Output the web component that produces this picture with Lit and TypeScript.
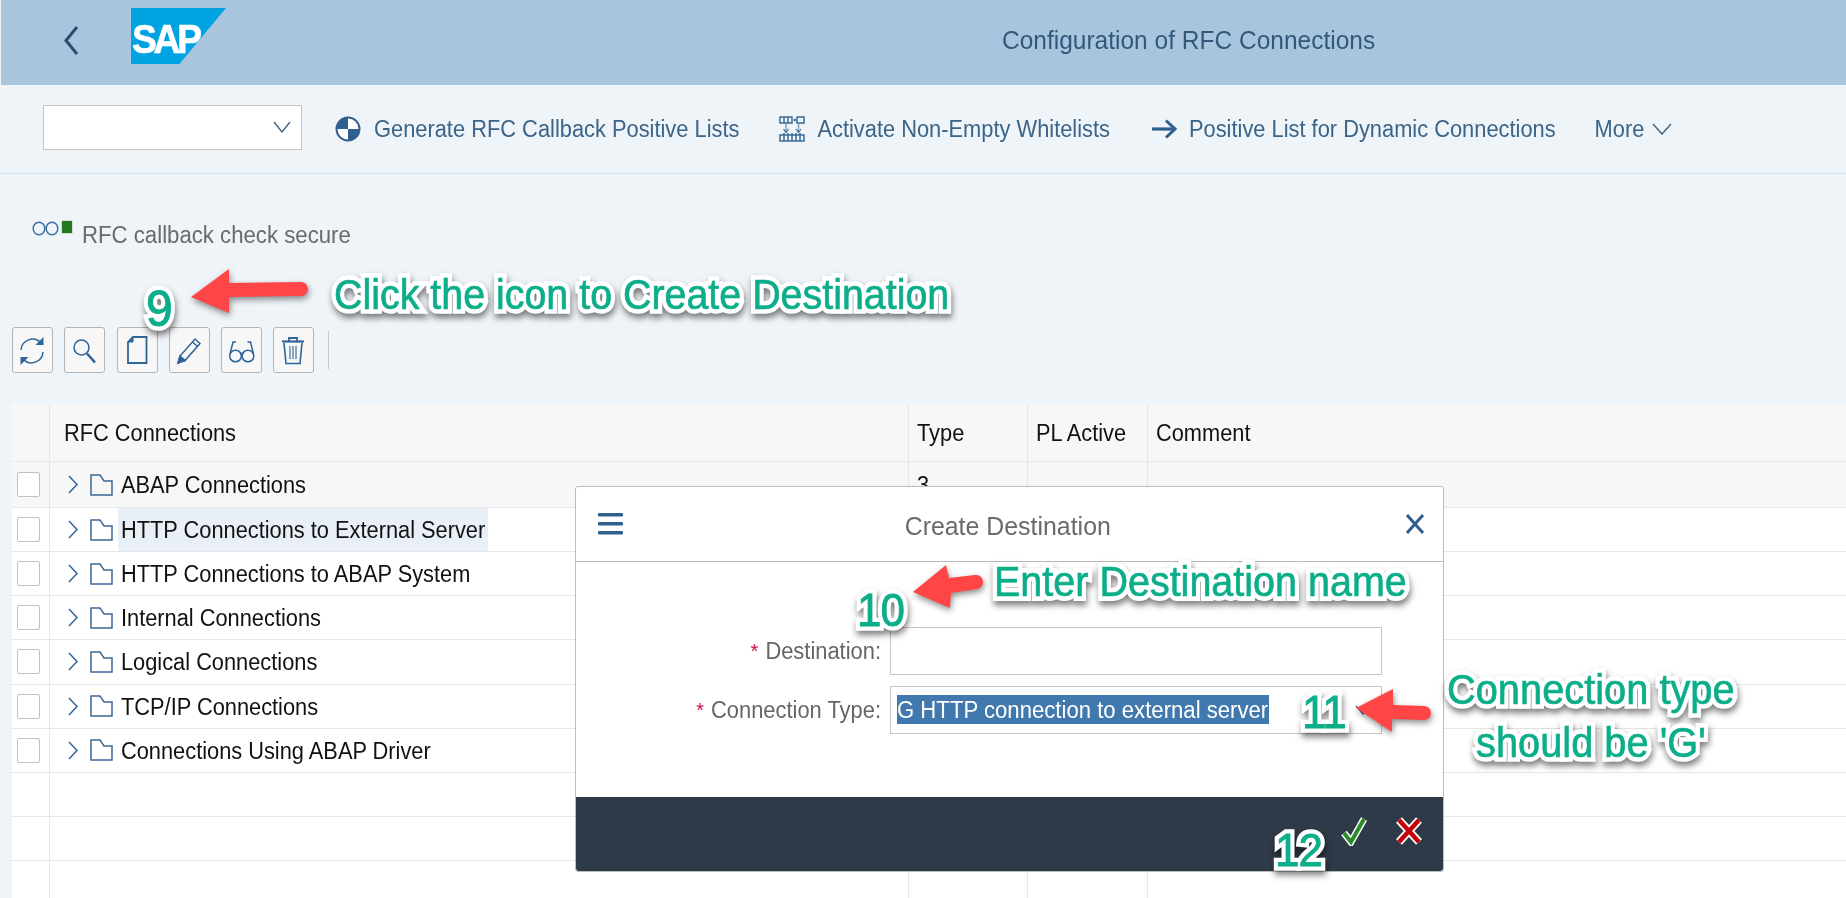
import { LitElement, html, css, svg } from "lit";
import { customElement } from "lit/decorators.js";

const rows = [
  "ABAP Connections",
  "HTTP Connections to External Server",
  "HTTP Connections to ABAP System",
  "Internal Connections",
  "Logical Connections",
  "TCP/IP Connections",
  "Connections Using ABAP Driver",
  "", "", "",
];

const ic = (inner: unknown) =>
  html`<svg width="30" height="34" viewBox="0 0 30 34" fill="none" stroke="#2f6497" stroke-width="1.5">${inner}</svg>`;

const toolIcons = [
  ic(svg`<path d="M3 17A11.500 11.500 0 0 1 23 10"/><path d="M25.500 4v8h-8z" stroke-width="0" fill="#2f6497"/><path d="M25 19A11.500 11.500 0 0 1 5 26"/><path d="M2.500 32v-8h8z" stroke-width="0" fill="#2f6497"/>`),
  ic(svg`<circle cx="11.500" cy="14.500" r="7.500"/><path d="M17 20.500l8 9" stroke-width="2.600"/>`),
  ic(svg`<path d="M11 4h13.500v26H6V9z" stroke-width="1.800"/><path d="M11 4v5H6z" fill="#2f6497" stroke-width="1"/>`),
  ic(svg`<path d="M4 30l2-7L21 6l5 4.500L11 27.500z"/><path d="M4 30l2-7 5 4.500z" fill="#2f6497"/><path d="M18.500 9l5 4.500"/>`),
  ic(svg`<circle cx="8.500" cy="23" r="5.800"/><circle cx="21" cy="23" r="5.800"/><path d="M13.500 21q1.300-1.500 2.500 0M3 21l3-12h3M26.500 21l-3-12h-3"/>`),
  ic(svg`<path d="M3 8.500h22" stroke-width="2.200"/><path d="M10 8V5h8v3" stroke-width="1.800"/><path d="M5 10l2 20.500h14l2-20.500" stroke-width="1.600"/><path d="M11 13v13M14 13v13M17 13v13" stroke-width="1.100"/>`),
];

@customElement("app-root")
export class AppRoot extends LitElement {
  static styles = css`
    :host {
      display: block;
      position: relative;
      width: 1846px;
      height: 898px;
      overflow: hidden;
      background: #eff4f9;
      font-family: "Liberation Sans", Arial, sans-serif;
    }
    .t {
      display: inline-block;
      transform: scaleY(1.1);
    }
    .header {
      height: 84.500px;
      background: #a9c5de;
      display: flex;
      align-items: flex-start;
      margin-left: 1px;
    }
    .back { margin: 26px 0 0 62px; }
    .logo {
      position: relative;
      margin: 8px 0 0 52px;
      width: 95px;
      height: 56px;
      background: #00a3e2;
      clip-path: polygon(0 0, 100% 0, 51% 100%, 0 100%);
      flex: none;
    }
    .logo span {
      position: absolute;
      left: 1px;
      top: 12px;
      color: #fff;
      font: bold 40px/38px "Liberation Sans", sans-serif;
      letter-spacing: -3.500px;
      -webkit-text-stroke: 0.7px #fff;
      transform: scaleX(0.93);
      transform-origin: left;
    }
    .title {
      margin: 24px 0 0 776px;
      font-size: 24.500px;
      line-height: 34px;
      color: #32597c;
      white-space: nowrap;
    }
    .title .t { transform: scaleY(1.06); }
    .toolbar {
      height: 88.500px;
      border-bottom: 1.500px solid #d6e3f0;
      display: flex;
      align-items: center;
      padding: 0 0 0 43px;
      color: #3a6488;
      font-size: 21.850px;
      white-space: nowrap;
    }
    .select {
      width: 259px;
      height: 45px;
      margin-top: -3px;
      background: #fff;
      border: 1px solid #c4c4c4;
      display: flex;
      align-items: center;
      justify-content: flex-end;
      padding-right: 10px;
      box-sizing: border-box;
    }
    .tb { display: flex; align-items: center; }
    .tb1 { margin-left: 33px; gap: 13px; }
    .tb2 { margin-left: 40px; gap: 12px; }
    .tb3 { margin-left: 41px; gap: 12px; }
    .tb4 { margin-left: 39px; gap: 8px; }
    .status {
      height: 121px;
      box-sizing: border-box;
      padding: 46px 0 0 32px;
      display: flex;
      align-items: flex-start;
      gap: 9px;
      color: #6a6a6a;
      font-size: 22.200px;
      line-height: 30px;
    }
    .buttons {
      display: flex;
      gap: 11.300px;
      padding-left: 12px;
      margin: 32px 0 33px;
      box-sizing: border-box;
      align-items: flex-start;
      height: 44px;
    }
    .btn {
      width: 41px;
      height: 46px;
      box-sizing: border-box;
      background: #f7f7f7;
      border: 1.500px solid #b4b4b4;
      border-radius: 3px;
      display: flex;
      align-items: center;
      justify-content: center;
    }
    .sep {
      width: 1.500px;
      height: 38px;
      margin: 4px 0 0 2px;
      background: #c8c8c8;
    }
    .table {
      margin-left: 12px;
      background: #fff;
      color: #111;
      font-size: 21.800px;
    }
    .row {
      display: grid;
      grid-template-columns: 38px 859px 119px 120px 1fr;
      height: 44.150px;
      box-sizing: border-box;
      border-bottom: 1.500px solid #e6e6e6;
    }
    .row.head {
      height: 58px;
      background: #f7f7f7;
      border-bottom-color: #e8e8e8;
    }
    .row.first { background: #f7f7f7; height: 46px; }
    .cell {
      display: flex;
      align-items: center;
      border-right: 1.500px solid #e6e6e6;
      padding-left: 8px;
      min-width: 0;
      white-space: nowrap;
    }
    .cell:last-child { border-right: none; }
    .cell.check { padding-left: 5px; }
    .cell.name { padding-left: 18px; }
    .cell.headname { padding-left: 14px; }
    .cb {
      width: 23px;
      height: 25px;
      box-sizing: border-box;
      background: #fff;
      border: 1.500px solid #c4c0c0;
      border-radius: 2px;
    }
    .folder { margin: 0 5px 0 12px; flex: none; }
    .label { padding: 0 3px; height: 43px; line-height: 43px; }
    .label.hi { background: #e8eff7; }
    .dialog {
      position: absolute;
      left: 575px;
      top: 485.500px;
      width: 868.500px;
      height: 386.500px;
      box-sizing: border-box;
      background: #fff;
      border: 1px solid #bcbcbc;
      border-radius: 3px;
      display: flex;
      flex-direction: column;
    }
    .dhead {
      height: 74px;
      border-bottom: 1.500px solid #bbb;
      display: flex;
      align-items: center;
      justify-content: space-between;
      padding: 0 18px 0 22px;
      flex: none;
    }
    .dtitle { font-size: 24.900px; color: #6a6a6a; margin: 6px 12px 0 0; }
    .dtitle .t { transform: scaleY(1.05); }
    .dbody {
      flex: 1;
      padding-top: 65px;
      display: flex;
      flex-direction: column;
      gap: 11px;
    }
    .frow {
      display: grid;
      grid-template-columns: 305px 492px;
      gap: 9px;
      align-items: center;
      font-size: 21.900px;
      color: #666;
    }
    .flabel { text-align: right; white-space: nowrap; }
    .req { color: #d0104c; font-size: 20px; margin-right: 7px; }
    .input {
      height: 48px;
      box-sizing: border-box;
      border: 1.500px solid #c6c6c6;
      background: #fff;
      display: flex;
      align-items: center;
      justify-content: space-between;
      padding: 0 10px 0 6px;
    }
    .sel {
      background: #4179ae;
      color: #fff;
      height: 29px;
      line-height: 29px;
      width: 372px;
      white-space: nowrap;
      font-size: 22.150px;
    }
    .dfoot {
      height: 74px;
      background: #2e3a47;
      flex: none;
      border-radius: 0 0 3px 3px;
      display: flex;
      justify-content: flex-end;
      align-items: flex-start;
      gap: 29px;
      padding: 19px 21px 0 0;
      box-sizing: border-box;
    }
    .note {
      position: absolute;
      color: #0cae8a;
      white-space: nowrap;
      -webkit-text-stroke: 0.6px #0cae8a;
      filter: drop-shadow(1px 4px 3px rgba(0, 0, 0, 0.5));
      transform: scaleY(1.06);
    }
    .note::before {
      content: attr(data-t);
      position: absolute;
      left: 0;
      top: 0;
      z-index: -1;
      -webkit-text-stroke: 9px #fff;
      color: #fff;
    }
    .n-click { left: 334px; top: 270px; font-size: 39.400px; line-height: 48px; }
    .n-enter { left: 994px; top: 556px; font-size: 39.500px; line-height: 50px; transform: scaleY(1.1); }
    .n-conn1 { left: 1447px; top: 663px; font-size: 39.800px; line-height: 53px; }
    .n-conn2 { left: 1476px; top: 716px; font-size: 39.800px; line-height: 53px; }
    .n-9 { left: 146px; top: 284px; font-size: 48px; line-height: 50px; -webkit-text-stroke-width: 1px; }
    .n-10 { left: 857px; top: 586px; font-size: 44px; line-height: 48px; letter-spacing: -1px; -webkit-text-stroke-width: 0.8px; }
    .n-11 { left: 1302px; top: 688px; font-size: 44px; line-height: 48px; letter-spacing: -1px; -webkit-text-stroke-width: 0.8px; }
    .n-12 { left: 1275px; top: 826px; font-size: 44px; line-height: 48px; letter-spacing: -1px; -webkit-text-stroke-width: 0.8px; }
    .arrow {
      position: absolute;
      filter: drop-shadow(1px 3px 3px rgba(0, 0, 0, 0.45));
    }
    .a-9 { left: 191px; top: 269px; }
    .a-10 { left: 913px; top: 565px; }
    .a-11 { left: 1356px; top: 688px; }
  `;

  render() {
    return html`
      <div class="header">
        <svg class="back" width="16" height="29" viewBox="0 0 16 29" fill="none" stroke="#2b4f72" stroke-width="3"><path d="M14 1L3 14.500 14 28"/></svg>
        <div class="logo"><span>SAP</span></div>
        <div class="title"><span class="t">Configuration of RFC Connections</span></div>
      </div>
      <div class="toolbar">
        <div class="select">
          <svg width="18" height="12" viewBox="0 0 18 12" fill="none" stroke="#3f6689" stroke-width="1.400"><path d="M1 1l8 10 8-10"/></svg>
        </div>
        <div class="tb tb1">
          <svg width="26" height="28" viewBox="0 0 26 28"><circle cx="13" cy="14" r="11.500" fill="#fff" stroke="#2f5f8c" stroke-width="2"/><path d="M13 14V2.500A11.500 11.500 0 0 0 1.500 14zM13 14v11.500A11.500 11.500 0 0 0 24.500 14z" fill="#2f5f8c"/></svg>
          <span class="t">Generate RFC Callback Positive Lists</span>
        </div>
        <div class="tb tb2">
          <svg width="26" height="26" viewBox="0 0 26 26" fill="none" stroke="#3a6a95" stroke-width="1.500"><path d="M1 1h12v6H1zM5 1v6M9 1v6M18 1h7v6h-7z"/><path d="M15 3h1.500v2H15z" fill="#3a6a95" stroke-width="0.500"/><path d="M7 8v8M19.500 8v8" stroke="#7f9fbd"/><path d="M4.500 13l2.500 3.500 2.500-3.500M17 13l2.500 3.500 2.500-3.500" stroke-width="1.100"/><path d="M1 19h24v6H1zM5 17v8M9 17v8M13 17v8M17 17v8M21 17v8"/></svg>
          <span class="t">Activate Non-Empty Whitelists</span>
        </div>
        <div class="tb tb3">
          <svg width="26" height="20" viewBox="0 0 26 20" fill="none" stroke="#2f5f8c"><path d="M1 10h22" stroke-width="3.200"/><path d="M15 1.500l9 8.500-9 8.500" stroke-width="3"/></svg>
          <span class="t">Positive List for Dynamic Connections</span>
        </div>
        <div class="tb tb4">
          <span class="t">More</span>
          <svg width="20" height="12" viewBox="0 0 20 12" fill="none" stroke="#3f6689" stroke-width="1.500"><path d="M1 1l9 10 9-10"/></svg>
        </div>
      </div>
      <div class="status">
        <svg width="41" height="16" viewBox="0 0 41 16" fill="none" stroke="#3f6f9e" stroke-width="1.500"><ellipse cx="7" cy="8.500" rx="5.800" ry="6.300"/><ellipse cx="20" cy="8.500" rx="5.800" ry="6.300"/><rect x="29.500" y="0.500" width="11" height="13" fill="#23791f" stroke="#fff" stroke-width="0.600"/></svg>
        <span class="t">RFC callback check secure</span>
      </div>
      <div class="buttons">
        ${toolIcons.map((i) => html`<div class="btn">${i}</div>`)}
        <div class="sep"></div>
      </div>
      <div class="table">
        <div class="row head">
          <div class="cell check"></div>
          <div class="cell headname"><span class="t">RFC Connections</span></div>
          <div class="cell"><span class="t">Type</span></div>
          <div class="cell"><span class="t">PL Active</span></div>
          <div class="cell"><span class="t">Comment</span></div>
        </div>
        ${rows.map(
          (r, i) => html`<div class="row ${i === 0 ? "first" : ""}">
            <div class="cell check">${r ? html`<div class="cb"></div>` : ""}</div>
            <div class="cell name">
              ${r
                ? html`<svg width="10" height="19" viewBox="0 0 10 19" fill="none" stroke="#2f6497" stroke-width="1.500"><path d="M1 1l8 8.500-8 8.500"/></svg>
                    <svg class="folder" width="23" height="22" viewBox="0 0 23 22" fill="none" stroke="#3a6a95" stroke-width="1.500"><path d="M1 1h9l4 6h8v14H1z"/></svg>
                    <span class="label ${i === 1 ? "hi" : ""}"><span class="t">${r}</span></span>`
                : ""}
            </div>
            <div class="cell">${i === 0 ? html`<span class="t">3</span>` : ""}</div>
            <div class="cell"></div>
            <div class="cell"></div>
          </div>`
        )}
      </div>

      <div class="dialog">
        <div class="dhead">
          <svg width="25" height="22" viewBox="0 0 25 22" fill="#2f5f8c"><rect width="25" height="3.500" rx="1"/><rect y="9" width="25" height="3.500" rx="1"/><rect y="18" width="25" height="3.500" rx="1"/></svg>
          <span class="dtitle"><span class="t">Create Destination</span></span>
          <svg width="20" height="20" viewBox="0 0 20 20" fill="none" stroke="#2f5f8c" stroke-width="3"><path d="M2 1l16 18M18 1L2 19"/></svg>
        </div>
        <div class="dbody">
          <div class="frow">
            <div class="flabel"><span class="req">*</span><span class="t">Destination:</span></div>
            <div class="input"></div>
          </div>
          <div class="frow">
            <div class="flabel"><span class="req">*</span><span class="t">Connection Type:</span></div>
            <div class="input">
              <div class="sel"><span class="t">G HTTP connection to external server</span></div>
              <svg width="16" height="10" viewBox="0 0 16 10" fill="none" stroke="#3f6689" stroke-width="1.400"><path d="M1 1l7 8 7-8"/></svg>
            </div>
          </div>
        </div>
        <div class="dfoot">
          <svg width="26" height="30" viewBox="0 0 26 30" fill="none"><path d="M3 17l7 9L23 3" stroke="#fff" stroke-width="7"/><path d="M3 17l7 9L23 3" stroke="#2b8a2b" stroke-width="4"/></svg>
          <svg width="26" height="30" viewBox="0 0 26 30" fill="none"><path d="M3 4l20 22M23 4L3 26" stroke="#fff" stroke-width="8"/><path d="M3 4l20 22M23 4L3 26" stroke="#c8000a" stroke-width="4.500"/></svg>
        </div>
      </div>

      <svg class="arrow a-9" width="126" height="50" viewBox="0 0 126 50"><path d="M0 28L38 0v14l72-1a7 7 0 0 1 0 14l-72 1v16z" fill="#ff4545"/></svg>
      <svg class="arrow a-10" width="76" height="50" viewBox="0 0 76 50"><path d="M0 27L33 0l3 13 26-3a7 7 0 0 1 2 14l-26 4-1 15z" fill="#ff4545"/></svg>
      <svg class="arrow a-11" width="82" height="50" viewBox="0 0 82 50"><path d="M0 20L37 1v16l31 1a7 7 0 0 1 0 14l-32-1v13z" fill="#ff4545"/></svg>

      <div class="note n-click" data-t="Click the icon to Create Destination">Click the icon to Create Destination</div>
      <div class="note n-enter" data-t="Enter Destination name">Enter Destination name</div>
      <div class="note n-conn1" data-t="Connection type">Connection type</div>
      <div class="note n-conn2" data-t="should be 'G'">should be 'G'</div>
      <div class="note n-9" data-t="9">9</div>
      <div class="note n-10" data-t="10">10</div>
      <div class="note n-11" data-t="11">11</div>
      <div class="note n-12" data-t="12">12</div>
    `;
  }
}
